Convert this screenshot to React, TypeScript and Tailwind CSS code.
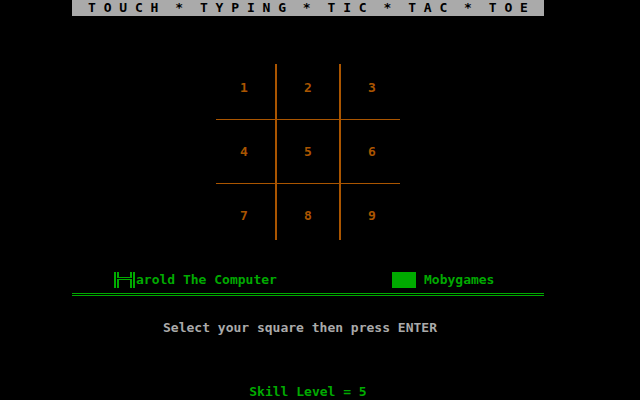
const TITLE_WORDS = ["T O U C H", "*", "T Y P I N G", "*", "T I C", "*", "T A C", "*", "T O E"];

const SQUARES = [
  { n: 1, cell: "border-r-2 border-b pt-4 pl-6" },
  { n: 2, cell: "border-r-2 border-b pt-4 pl-[27px]" },
  { n: 3, cell: "border-b pt-4 pl-[27px]" },
  { n: 4, cell: "border-r-2 border-b pt-6 pl-6" },
  { n: 5, cell: "border-r-2 border-b pt-6 pl-[27px]" },
  { n: 6, cell: "border-b pt-6 pl-[27px]" },
  { n: 7, cell: "border-r-2 pt-6 pl-6" },
  { n: 8, cell: "border-r-2 pt-6 pl-[27px]" },
  { n: 9, cell: "pt-6 pl-[27px]" },
];

function Title() {
  return (
    <h1 className="flex h-4 justify-between bg-[#aaaaaa] px-4 text-black">
      {TITLE_WORDS.map((word, i) => (
        <span key={i} className="whitespace-pre">
          {word}
        </span>
      ))}
    </h1>
  );
}

function Board() {
  return (
    <div className="mx-auto mt-12 grid w-[184px] grid-cols-[61px_64px_59px] grid-rows-[56px_64px_56px] text-[#aa5500]">
      {SQUARES.map(({ n, cell }) => (
        <button key={n} type="button" className={`flex items-start border-[#aa5500] ${cell}`}>
          {n}
        </button>
      ))}
    </div>
  );
}

// The oversized initial, drawn as double-line box pieces.
function BigH() {
  return (
    <svg width="24" height="16" viewBox="0 0 24 16" fill="currentColor" shapeRendering="crispEdges" role="img" aria-label="H">
      <rect x="2" y="0" width="2" height="16" />
      <rect x="5" y="0" width="2" height="6" />
      <rect x="5" y="7" width="2" height="9" />
      <rect x="7" y="5" width="11" height="1" />
      <rect x="7" y="7" width="11" height="1" />
      <rect x="18" y="0" width="2" height="6" />
      <rect x="18" y="7" width="2" height="9" />
      <rect x="21" y="0" width="2" height="16" />
    </svg>
  );
}

function Players() {
  return (
    <div className="mt-8 flex justify-between border-b-3 border-double border-[#00aa00] pr-12 pb-[5px] pl-10">
      <div className="flex">
        <BigH />
        <span>arold The Computer</span>
      </div>
      <div className="flex gap-2">
        <span className="h-4 w-6 bg-[#00aa00]" />
        <span className="w-[72px]">Mobygames</span>
      </div>
    </div>
  );
}

export default function App() {
  return (
    <main className="min-h-screen bg-black pr-24 pl-[72px] font-['DejaVu_Sans_Mono',monospace] text-[13px] leading-4 font-bold text-[#00aa00]">
      <Title />
      <Board />
      <Players />
      <p className="mt-6 pr-4 text-center text-[#aaaaaa]">Select your square then press ENTER</p>
      <p className="mt-12 text-center">Skill Level = 5</p>
    </main>
  );
}
